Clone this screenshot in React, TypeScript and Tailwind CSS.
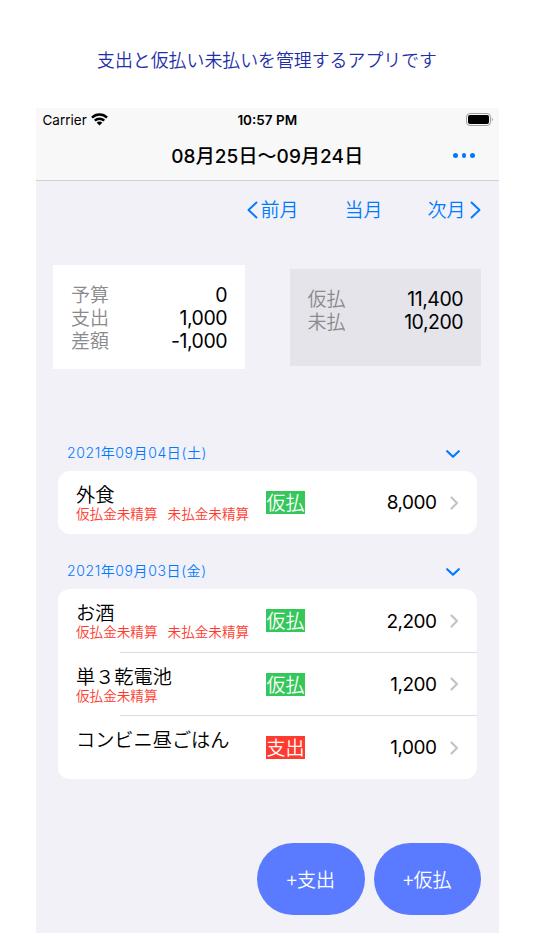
import React from 'react';

type Entry = {
  title: string;
  notes: string[];
  kind: '仮払' | '支出';
  amount: string;
};

type Section = {
  date: string;
  entries: Entry[];
};

const sections: Section[] = [
  {
    date: '2021年09月04日(土)',
    entries: [{ title: '外食', notes: ['仮払金未精算', '未払金未精算'], kind: '仮払', amount: '8,000' }],
  },
  {
    date: '2021年09月03日(金)',
    entries: [
      { title: 'お酒', notes: ['仮払金未精算', '未払金未精算'], kind: '仮払', amount: '2,200' },
      { title: '単３乾電池', notes: ['仮払金未精算'], kind: '仮払', amount: '1,200' },
      { title: 'コンビニ昼ごはん', notes: [], kind: '支出', amount: '1,000' },
    ],
  },
];

const WifiIcon = () => (
  <svg className="h-[13px] w-[17px] -translate-x-px -translate-y-px" viewBox="0 0 17 13" fill="none" stroke="black" strokeWidth={2.5}>
    <path d="M1 4.6a10.6 10.6 0 0115 0" />
    <path d="M3.8 7.6a6.6 6.6 0 019.4 0" />
    <path d="M8.5 12.4L5.7 9.8a3.9 3.9 0 015.6 0z" fill="black" stroke="none" />
  </svg>
);

const BatteryIcon = () => (
  <svg className="h-[13px] w-[28px]" viewBox="0 0 28 13" fill="none">
    <rect x="0.5" y="0.5" width="24" height="12" rx="3.5" stroke="#a0a0a0" />
    <rect x="2" y="2" width="21" height="9" rx="2" fill="black" />
    <path d="M25.8 4.6c1.4.5 1.4 3.3 0 3.8z" fill="#a0a0a0" />
  </svg>
);

const Chevron = ({ d, className }: { d: string; className: string }) => (
  <svg className={className} viewBox="0 0 14 18" fill="none" stroke="currentColor" strokeLinecap="round" strokeLinejoin="round">
    <path d={d} />
  </svg>
);

const SummaryRow = ({ label, value }: { label: string; value: string }) => (
  <div className="flex h-[23px] items-center justify-between leading-[23px]">
    <span className="pb-[2px] text-[#8a8a8e]">{label}</span>
    <span className="pt-px font-['Inter'] text-[19.5px] font-normal tracking-[-0.5px]">{value}</span>
  </div>
);

const EntryRow = ({ entry, last }: { entry: Entry; last: boolean }) => (
  <li className="relative flex h-[63.3px] items-center">
    <div className="flex h-full w-[208px] flex-col pt-[12px] pl-[18px]">
      <p className="h-[22px] text-[19.2px] leading-[23px] whitespace-nowrap">{entry.title}</p>
      <p className="flex gap-[10px] text-[13.6px] leading-[16px] whitespace-nowrap text-[#ff3b30]">
        {entry.notes.map((note) => (
          <span key={note}>{note}</span>
        ))}
      </p>
    </div>
    <span
      className={`h-[23px] w-[39px] text-center text-[19px] leading-[21px] text-white ${
        entry.kind === '仮払' ? 'bg-[#34c759]' : 'bg-[#ff3b30]'
      }`}
    >
      {entry.kind}
    </span>
    <span className="mt-[2px] ml-auto font-['Inter'] text-[19px] font-normal tracking-[-0.5px]">{entry.amount}</span>
    <Chevron d="M4.500 3.500l5.500 5.500-5.500 5.500" className="mr-[16px] ml-[10px] h-[18px] w-[14px] stroke-[2.2] text-[#c4c4c6]" />
    {!last && <div className="absolute right-0 bottom-0 left-[62px] h-px bg-[#dcdcde]" />}
  </li>
);

export default function App() {
  return (
    <div className="h-[950px] w-[534px] overflow-hidden bg-white font-['Noto_Sans_CJK_JP',sans-serif] font-[350] text-black">
      <h1 className="h-[108px] pt-[46px] text-center text-[17.9px] leading-[26px] text-[#1f2fa8]">
        支出と仮払い未払いを管理するアプリです
      </h1>

      <div className="ml-[35.5px] flex h-[825px] w-[463.5px] flex-col bg-[#f2f1f7]">
        <header className="h-[73px] shrink-0 border-b border-[#d2d2d6] bg-[#f8f8f8]">
          <div className="grid h-[24px] grid-cols-[1fr_auto_1fr] items-center pr-[5px] pl-[7px] font-['Inter'] text-[13.5px] font-normal">
            <div className="flex items-center gap-[5px]">
              <span>Carrier</span>
              <WifiIcon />
            </div>
            <span className="mr-[2px] text-center font-semibold">10:57 PM</span>
            <div className="flex justify-end pb-[2px]">
              <BatteryIcon />
            </div>
          </div>
          <div className="grid h-[47px] grid-cols-[1fr_auto_1fr] items-center">
            <h2 className="col-start-2 pt-[3px] font-['Inter','Noto_Sans_CJK_JP',sans-serif] text-[19px] font-medium tracking-[0.1px]">
              08月25日～09月24日
            </h2>
            <div className="flex justify-end gap-[4px] pr-[24px]">
              <span className="size-[4.6px] rounded-full bg-[#007aff]" />
              <span className="size-[4.6px] rounded-full bg-[#007aff]" />
              <span className="size-[4.6px] rounded-full bg-[#007aff]" />
            </div>
          </div>
        </header>

        <nav className="flex h-[57px] shrink-0 items-center justify-end pr-[17.5px] text-[19px] text-[#007aff]">
          <button type="button" className="flex items-center">
            <Chevron d="M11.500 1.500L3.500 9l8 7.500" className="mr-px h-[18px] w-[14px] stroke-[1.9]" />
            前月
          </button>
          <button type="button" className="ml-[46px]">当月</button>
          <button type="button" className="ml-[45px] flex items-center">
            次月
            <Chevron d="M3.500 1.500L11.500 9l-8 7.500" className="ml-[2px] h-[18px] w-[14px] stroke-[1.9]" />
          </button>
        </nav>

        <div className="flex h-[197px] shrink-0 items-start justify-between pt-[27px] pr-[18px] pl-[17.5px] text-[19px]">
          <div className="h-[104px] w-[192px] bg-white px-[18px] pt-[18px]">
            <SummaryRow label="予算" value="0" />
            <SummaryRow label="支出" value="1,000" />
            <SummaryRow label="差額" value="-1,000" />
          </div>
          <div className="mt-[4px] h-[97px] w-[191.500px] bg-[#e5e4ea] px-[18px] pt-[18px]">
            <SummaryRow label="仮払" value="11,400" />
            <SummaryRow label="未払" value="10,200" />
          </div>
        </div>

        <main className="px-[22.5px]">
          {sections.map((section) => (
            <section key={section.date} className="mb-[19px]">
              <div className="flex h-[36px] items-center justify-between pr-[17px] pl-[9px] text-[#007aff]">
                <h3 className="pb-px font-['Inter','Noto_Sans_CJK_JP',sans-serif] text-[14px] tracking-[0.6px]">{section.date}</h3>
                <Chevron d="M1.200 7.200L7 12.700l5.800-5.500" className="h-[18px] w-[14px] stroke-[2.2]" />
              </div>
              <ul className="overflow-hidden rounded-[12px] bg-white">
                {section.entries.map((entry, i) => (
                  <EntryRow key={entry.title} entry={entry} last={i === section.entries.length - 1} />
                ))}
              </ul>
            </section>
          ))}
        </main>

        <footer className="mt-auto mb-[18px] flex justify-end gap-[9px] pr-[18px] text-[19px] text-white">
          <button type="button" className="h-[72px] w-[107.500px] rounded-full bg-[#5a7bff]">+支出</button>
          <button type="button" className="h-[72px] w-[107.500px] rounded-full bg-[#5a7bff]">+仮払</button>
        </footer>
      </div>
    </div>
  );
}
